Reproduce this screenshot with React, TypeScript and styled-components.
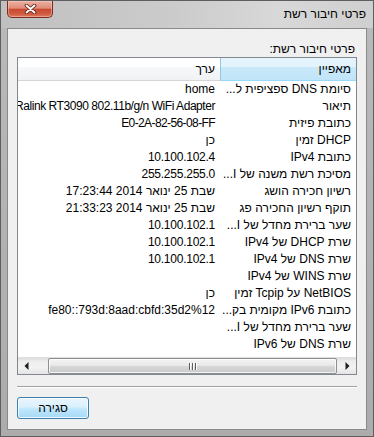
import React from 'react';
import styled, { createGlobalStyle } from 'styled-components';

const Global = createGlobalStyle`
  html, body { margin: 0; padding: 0; background: #a9a9a9; }
  body { font-family: "Liberation Sans", Arial, sans-serif; }
  * { box-sizing: border-box; }
`;

const Window = styled.div`
  width: 374px;
  height: 437px;
  display: flex;
  flex-direction: column;
  overflow: hidden;
  border: 1px solid #5e5e5e;
  background: linear-gradient(to bottom, #c6c6c6 0px, #b9b9b9 27px, #acacac 100%);
`;

const TitleBar = styled.div`
  height: 27px;
  flex-shrink: 0;
  display: flex;
  align-items: flex-start;
  padding: 0 7px 0 6px;
  background: linear-gradient(to right, #c0c0c0 0%, #cbcbcb 45%, #d8d8d8 75%, #cfcfcf 100%);
`;

const CloseButton = styled.div`
  width: 46px;
  height: 17px;
  display: flex;
  align-items: center;
  justify-content: center;
  border: 1px solid #7a2c1f;
  border-top: none;
  border-radius: 0 0 5px 5px;
  background: linear-gradient(to bottom, #eab2a5 0%, #e08b77 45%, #c84a31 52%, #cf5a40 80%, #e07b5f 100%);
  box-shadow: inset 0 0 0 1px rgba(255, 210, 200, 0.45);
`;

const Title = styled.div`
  margin-left: auto;
  direction: rtl;
  font-size: 12px;
  line-height: 27px;
  padding-bottom: 3px;
  color: #000;
`;

const Frame = styled.div`
  flex: 1;
  min-height: 0;
  display: flex;
  padding: 0 6px 6px;
`;

const Client = styled.div`
  flex: 1;
  min-width: 0;
  display: flex;
  flex-direction: column;
  direction: rtl;
  border: 1px solid #8a8a8a;
  background: #f0f0f0;
  padding: 13px 9px 0 9px;
  font-size: 12px;
  color: #000;
`;

const Label = styled.div`
  line-height: 15px;
  height: 15px;
  padding-right: 2px;
`;

const List = styled.div`
  height: 318px;
  flex-shrink: 0;
  min-width: 0;
  display: grid;
  grid-template-rows: 23px minmax(0, 1fr) 17px;
  grid-template-columns: minmax(0, 1fr);
  overflow: hidden;
  border: 1px solid #828790;
  background: #fff;
`;

const Header = styled.div`
  display: flex;
  min-width: 0;
  overflow: hidden;
`;

const HeaderCell = styled.div<{ $w: number; $sorted?: boolean }>`
  width: ${p => p.$w}px;
  flex-shrink: 0;
  line-height: 22px;
  padding-right: 5px;
  white-space: nowrap;
  border-left: 1px solid ${p => (p.$sorted ? '#96c6e4' : '#e3e5e8')};
  border-bottom: 1px solid ${p => (p.$sorted ? '#96d9f9' : '#d5d5d5')};
  background: ${p =>
    p.$sorted
      ? 'linear-gradient(to bottom, #e3f4fc 0%, #e2f3fc 40%, #c9e9f9 41%, #c1e4f8 100%)'
      : 'linear-gradient(to bottom, #ffffff 0%, #ffffff 40%, #f7f8fa 41%, #f1f2f4 100%)'};
`;

const Rows = styled.div`
  display: flex;
  flex-direction: column;
  min-width: 0;
  overflow: hidden;
`;

const Row = styled.div`
  height: 17px;
  flex-shrink: 0;
  display: flex;
`;

const Cell = styled.div<{ $w: number; $ls?: number }>`
  width: ${p => p.$w}px;
  flex-shrink: 0;
  line-height: 17px;
  padding-right: 5px;
  white-space: nowrap;
  overflow: hidden;
  letter-spacing: ${p => p.$ls ?? 0}px;
`;

const ScrollBar = styled.div`
  display: flex;
  direction: ltr;
  border-top: 1px solid #e0e0e0;
  background: linear-gradient(to bottom, #dcdcdc 0%, #ededed 20%, #f2f2f2 60%, #e4e4e4 100%);
`;

const ArrowButton = styled.div`
  width: 17px;
  flex-shrink: 0;
  display: flex;
  align-items: center;
  justify-content: center;
`;

const Track = styled.div`
  flex: 1;
  display: flex;
  padding: 0 2px 0 13px;
`;

const Thumb = styled.div`
  flex: 1;
  display: flex;
  align-items: center;
  justify-content: center;
  border: 1px solid #8e8f8f;
  border-radius: 2px;
  background: linear-gradient(to bottom, #f4f4f4 0%, #e9e9e9 45%, #d6d6d6 55%, #cbcbcb 100%);
  box-shadow: inset 0 0 0 1px rgba(255, 255, 255, 0.75);
`;

const Separator = styled.div`
  height: 2px;
  flex-shrink: 0;
  margin-top: 11px;
  border-top: 1px solid #a0a0a0;
  border-bottom: 1px solid #ffffff;
`;

const Footer = styled.div`
  display: flex;
  justify-content: flex-end;
  padding-top: 9px;
`;

const Button = styled.button`
  width: 72px;
  height: 22px;
  padding: 0;
  font-family: "Liberation Sans", Arial, sans-serif;
  font-size: 12px;
  color: #000;
  direction: rtl;
  border: 1px solid #3c7fb1;
  border-radius: 3px;
  background: linear-gradient(to bottom, #eaf6fd 0%, #d9f0fc 45%, #bee6fd 55%, #a7d9f5 100%);
  box-shadow: inset 0 0 0 1px rgba(255, 255, 255, 0.8);
`;

const PROP_W = 136;
const VAL_W = 320;

type Item = { k: string; v: string; ls?: number };

const rows: Item[] = [
  { k: 'סיומת DNS ספציפית ל...', v: 'home' },
  { k: 'תיאור', v: 'Ralink RT3090 802.11b/g/n WiFi Adapter', ls: -0.45 },
  { k: 'כתובת פיזית', v: 'E0-2A-82-56-08-FF', ls: -0.6 },
  { k: 'DHCP זמין', v: 'כן' },
  { k: 'כתובת IPv4', v: '10.100.102.4', ls: -0.25 },
  { k: 'מסיכת רשת משנה של I...', v: '255.255.255.0', ls: -0.25 },
  { k: 'רשיון חכירה הושג', v: 'שבת 25 ינואר 2014 17:23:44' },
  { k: 'תוקף רשיון החכירה פג', v: 'שבת 25 ינואר 2014 21:33:23' },
  { k: 'שער ברירת מחדל של I...', v: '10.100.102.1', ls: -0.25 },
  { k: 'שרת DHCP של IPv4', v: '10.100.102.1', ls: -0.25 },
  { k: 'שרת DNS של IPv4', v: '10.100.102.1', ls: -0.25 },
  { k: 'שרת WINS של IPv4', v: '' },
  { k: 'NetBIOS על Tcpip זמין', v: 'כן' },
  { k: 'כתובת IPv6 מקומית בק...', v: 'fe80::793d:8aad:cbfd:35d2%12' },
  { k: 'שער ברירת מחדל של I...', v: '' },
  { k: 'שרת DNS של IPv6', v: '' },
];

export default function App() {
  return (
    <>
      <Global />
      <Window>
        <TitleBar>
          <CloseButton>
            <svg width="13" height="10" viewBox="0 0 13 10">
              <path d="M2.5 1.5 L10.5 8.5 M10.5 1.5 L2.5 8.5" stroke="#5a1a10" strokeWidth="3.6" strokeLinecap="round" />
              <path d="M2.5 1.5 L10.5 8.5 M10.5 1.5 L2.5 8.5" stroke="#ffffff" strokeWidth="2" strokeLinecap="round" />
            </svg>
          </CloseButton>
          <Title>פרטי חיבור רשת</Title>
        </TitleBar>
        <Frame>
          <Client>
            <Label>פרטי חיבור רשת:</Label>
            <List>
              <Header>
                <HeaderCell $w={PROP_W} $sorted>מאפיין</HeaderCell>
                <HeaderCell $w={VAL_W}>ערך</HeaderCell>
              </Header>
              <Rows>
                {rows.map((r, i) => (
                  <Row key={i}>
                    <Cell $w={PROP_W}>{r.k}</Cell>
                    <Cell $w={VAL_W} $ls={r.ls}>{r.v}</Cell>
                  </Row>
                ))}
              </Rows>
              <ScrollBar>
                <ArrowButton>
                  <svg width="5" height="8" viewBox="0 0 5 8">
                    <path d="M4.5 0 L0.5 4 L4.5 8 Z" fill="#1e1e1e" />
                  </svg>
                </ArrowButton>
                <Track>
                  <Thumb>
                    <svg width="8" height="7" viewBox="0 0 8 7">
                      <path d="M0.5 0 V7 M3.5 0 V7 M6.5 0 V7" stroke="#5d5d5d" strokeWidth="1" />
                      <path d="M1.5 0 V7 M4.5 0 V7 M7.5 0 V7" stroke="#ffffff" strokeWidth="1" />
                    </svg>
                  </Thumb>
                </Track>
                <ArrowButton>
                  <svg width="5" height="8" viewBox="0 0 5 8">
                    <path d="M0.5 0 L4.5 4 L0.5 8 Z" fill="#1e1e1e" />
                  </svg>
                </ArrowButton>
              </ScrollBar>
            </List>
            <Separator />
            <Footer>
              <Button>סגירה</Button>
            </Footer>
          </Client>
        </Frame>
      </Window>
    </>
  );
}
